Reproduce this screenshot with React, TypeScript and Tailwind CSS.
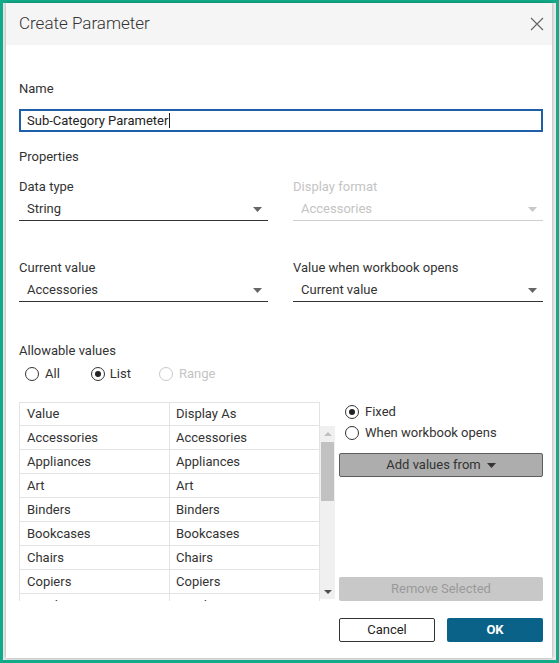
import React from 'react'

const rows = ['Accessories', 'Appliances', 'Art', 'Binders', 'Bookcases', 'Chairs', 'Copiers', 'Envelopes']

function Caret({ color = '#555' }: { color?: string }) {
  return (
    <svg width="9" height="5" viewBox="0 0 9 5">
      <path d="M0 0 L9 0 L4.5 5 Z" fill={color} />
    </svg>
  )
}

function Radio({ checked, disabled }: { checked?: boolean; disabled?: boolean }) {
  return (
    <span
      className={`w-[14px] h-[14px] rounded-full border flex items-center justify-center shrink-0 ${
        disabled ? 'border-[#c8c8c8]' : 'border-[#333]'
      }`}
    >
      {checked && <span className="w-[6px] h-[6px] rounded-full bg-[#222]" />}
    </span>
  )
}

function Select({ value, disabled }: { value: string; disabled?: boolean }) {
  return (
    <div
      className={`h-[23px] flex items-center justify-between pl-[8px] pr-[6px] border-b ${
        disabled ? 'border-[#cfcfcf] text-[#c4c4c4]' : 'border-[#333] text-[#333]'
      }`}
    >
      <span>{value}</span>
      <Caret color={disabled ? '#c8c8c8' : '#666'} />
    </div>
  )
}

export default function App() {
  return (
    <div
      className="w-[559px] h-[663px] border-[3px] border-[#12ab89] bg-[#e9e9e9] flex text-[13px] text-[#333]"
      style={{ fontFamily: 'Roboto, "Liberation Sans", sans-serif' }}
    >
      <div className="flex-1 ml-[3px] mr-[4px] mb-[2px] bg-white shadow-[0_0_3px_rgba(0,0,0,0.3)] flex flex-col">
        {/* Header */}
        <div className="h-[42px] bg-[#f5f5f5] flex items-center justify-between pl-[13px] pr-[8px]">
          <span className="text-[17px] font-light text-[#333]">Create Parameter</span>
          <svg width="14" height="14" viewBox="0 0 14 14">
            <path d="M1 1 L13 13 M13 1 L1 13" stroke="#666" strokeWidth="1.2" />
          </svg>
        </div>

        <div className="pl-[13px] pr-[9px] flex flex-col">
          <div className="mt-[36px] h-[16px] leading-[16px]">Name</div>
          <div className="mt-[12px] h-[23px] border-2 border-[#1f5fa8] flex items-center pl-[6px] text-[#222]">
            Sub-Category Parameter
            <span className="w-px h-[15px] bg-[#222] ml-px" />
          </div>

          <div className="mt-[17px] h-[16px] leading-[16px]">Properties</div>

          <div className="grid grid-cols-[249px_250px] gap-x-[25px]">
            <div>
              <div className="mt-[14px] h-[16px] leading-[16px]">Data type</div>
              <div className="mt-[3px]">
                <Select value="String" />
              </div>
            </div>
            <div>
              <div className="mt-[14px] h-[16px] leading-[16px] text-[#c4c4c4]">Display format</div>
              <div className="mt-[3px]">
                <Select value="Accessories" disabled />
              </div>
            </div>
            <div>
              <div className="mt-[39px] h-[16px] leading-[16px]">Current value</div>
              <div className="mt-[3px]">
                <Select value="Accessories" />
              </div>
            </div>
            <div>
              <div className="mt-[39px] h-[16px] leading-[16px]">Value when workbook opens</div>
              <div className="mt-[3px]">
                <Select value="Current value" />
              </div>
            </div>
          </div>

          <div className="mt-[41px] h-[16px] leading-[16px]">Allowable values</div>
          <div className="mt-[7px] h-[16px] flex items-center pl-[6px]">
            <Radio />
            <span className="ml-[6px]">All</span>
            <span className="ml-[31px]">
              <Radio checked />
            </span>
            <span className="ml-[5px]">List</span>
            <span className="ml-[28px]">
              <Radio disabled />
            </span>
            <span className="ml-[6px] text-[#c4c4c4]">Range</span>
          </div>

          <div className="mt-[20px] flex">
            {/* Table */}
            <div className="flex">
              <div className="w-[301px] h-[199px] overflow-hidden">
                <div className="flex h-[24px] border border-[#e3e3e3]">
                  <div className="w-[150px] border-r border-[#e3e3e3] pl-[7px] flex items-center">Value</div>
                  <div className="flex-1 pl-[6px] flex items-center">Display As</div>
                </div>
                {rows.map(r => (
                  <div key={r} className="flex h-[24px] border-x border-b border-[#e3e3e3]">
                    <div className="w-[150px] border-r border-[#e3e3e3] pl-[7px] flex items-center">{r}</div>
                    <div className="flex-1 pl-[6px] flex items-center">{r}</div>
                  </div>
                ))}
              </div>
              <div className="w-[15px] mt-[24px] h-[173px] bg-[#f0f0f0] flex flex-col items-center">
                <div className="h-[16px] flex items-center">
                  <svg width="8" height="4" viewBox="0 0 8 4">
                    <path d="M0 4 L8 4 L4 0 Z" fill="#c0c0c0" />
                  </svg>
                </div>
                <div className="w-[13px] h-[59px] bg-[#c1c1c1]" />
                <div className="flex-1" />
                <div className="h-[14px] flex items-center">
                  <svg width="8" height="4" viewBox="0 0 8 4">
                    <path d="M0 0 L8 0 L4 4 Z" fill="#505050" />
                  </svg>
                </div>
              </div>
            </div>

            {/* Right side */}
            <div className="ml-[4px] flex-1 flex flex-col">
              <div className="h-[21px] -mt-px flex items-center pl-[6px]">
                <Radio checked />
                <span className="ml-[6px]">Fixed</span>
              </div>
              <div className="h-[21px] flex items-center pl-[6px]">
                <Radio />
                <span className="ml-[6px]">When workbook opens</span>
              </div>
              <div className="mt-[10px] h-[24px] bg-[#adadad] border border-[#5c5c5c] rounded-[2px] flex items-center justify-center gap-[6px] text-[#333]">
                <span>Add values from</span>
                <Caret color="#333" />
              </div>
              <div className="mt-[100px] h-[24px] bg-[#c8c8c8] rounded-[2px] flex items-center justify-center text-[#9a9a9a]">
                Remove Selected
              </div>
            </div>
          </div>

          <div className="mt-[17px] flex justify-end gap-[12px]">
            <div className="w-[96px] h-[24px] border border-[#333] rounded-[2px] flex items-center justify-center text-[#222]">
              Cancel
            </div>
            <div className="w-[96px] h-[24px] bg-[#0a6289] rounded-[2px] flex items-center justify-center text-white font-bold">
              OK
            </div>
          </div>
        </div>
      </div>
    </div>
  )
}
